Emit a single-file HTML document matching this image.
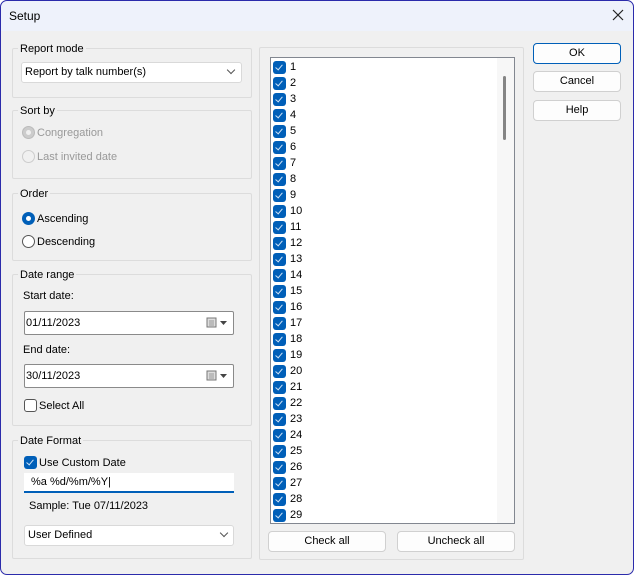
<!DOCTYPE html><html><head><style>
*{box-sizing:border-box;margin:0;padding:0}
body{width:634px;height:575px;overflow:hidden;font-family:"Liberation Sans",sans-serif;font-size:11px;color:#000;background:#fff}
.win{position:absolute;left:0;top:0;width:634px;height:575px;border-radius:7px;background:#f0f0f0;overflow:hidden}
.frame{position:absolute;left:0;top:0;width:634px;height:575px;border:1px solid #2b2bab;border-radius:7px;pointer-events:none}
.title{position:absolute;left:0;top:0;width:634px;height:31px;background:#eef2fb}
.a{position:absolute;white-space:nowrap;line-height:16px}
.gb{position:absolute;border:1px solid #dcdcdc;border-radius:2px}
.gl{position:absolute;background:#f0f0f0;padding:0 2px;line-height:15px}
.combo{position:absolute;background:#fff;border:1px solid #d9d9d9;border-radius:3px;line-height:19px;padding-left:3px}
.edit{position:absolute;background:#fff;border:1px solid #8a8a8a;border-radius:2px;line-height:22px;padding-left:1px}
.btn{position:absolute;background:#fdfdfd;border:1px solid #d0d0d0;border-radius:4px;text-align:center;line-height:19px}
.cb{position:absolute;width:13px;height:13px;background:#005fb8;border-radius:3px}
.cb:after{content:"";position:absolute;left:4px;top:2px;width:3px;height:6px;border:solid #cfe3f7;border-width:0 1px 1px 0;transform:rotate(40deg)}
.rad{position:absolute;width:13px;height:13px;border-radius:50%;border:1px solid #555;background:#fff}
.chev{position:absolute;width:6px;height:6px;border:solid #555;border-width:0 1px 1px 0;transform:rotate(45deg)}
</style></head><body><div class="win">
<div class="title"></div>
<div class="a" style="left:9px;top:8px;font-size:12px">Setup</div>
<svg class="a" style="left:612px;top:9px" width="12" height="12"><path d="M1 1L11 11M11 1L1 11" stroke="#222" stroke-width="1.2"/></svg>

<div class="gb" style="left:12px;top:48px;width:240px;height:50px"></div>
<div class="gl a" style="left:18px;top:42px">Report mode</div>
<div class="combo" style="left:21px;top:62px;width:221px;height:21px">Report by talk number(s)</div>
<div class="chev" style="left:228px;top:67px"></div>

<div class="gb" style="left:12px;top:110px;width:240px;height:69px"></div>
<div class="gl a" style="left:18px;top:104px">Sort by</div>
<div class="rad" style="left:22px;top:126px;border-color:#bbb;background:#ccc"><div style="position:absolute;left:3px;top:3px;width:5px;height:5px;border-radius:50%;background:#f0f0f0"></div></div>
<div class="a" style="left:37px;top:125px;color:#999">Congregation</div>
<div class="rad" style="left:22px;top:150px;border-color:#ccc;background:#f0f0f0"></div>
<div class="a" style="left:37px;top:149px;color:#999">Last invited date</div>

<div class="gb" style="left:12px;top:193px;width:240px;height:68px"></div>
<div class="gl a" style="left:18px;top:187px">Order</div>
<div class="rad" style="left:22px;top:212px;border:none;background:#005fb8"><div style="position:absolute;left:4px;top:4px;width:5px;height:5px;border-radius:50%;background:#fff"></div></div>
<div class="a" style="left:37px;top:211px">Ascending</div>
<div class="rad" style="left:22px;top:235px"></div>
<div class="a" style="left:37px;top:234px">Descending</div>

<div class="gb" style="left:12px;top:274px;width:240px;height:152px"></div>
<div class="gl a" style="left:18px;top:268px">Date range</div>
<div class="a" style="left:23px;top:288px">Start date:</div>
<div class="edit" style="left:24px;top:311px;width:210px;height:24px">01/11/2023</div>
<svg class="a" style="left:206px;top:317px" width="24" height="12"><rect x="1" y="1" width="9" height="9" fill="#ddd" stroke="#777"/><path d="M3 4h5M3 6h5M3 8h5" stroke="#999"/><path d="M14 4h7l-3.5 4z" fill="#444"/></svg>
<div class="a" style="left:23px;top:342px">End date:</div>
<div class="edit" style="left:24px;top:364px;width:210px;height:24px">30/11/2023</div>
<svg class="a" style="left:206px;top:370px" width="24" height="12"><rect x="1" y="1" width="9" height="9" fill="#ddd" stroke="#777"/><path d="M3 4h5M3 6h5M3 8h5" stroke="#999"/><path d="M14 4h7l-3.5 4z" fill="#444"/></svg>
<div class="a" style="left:24px;top:399px;width:13px;height:13px;border:1px solid #555;border-radius:3px;background:#fff"></div>
<div class="a" style="left:39px;top:398px">Select All</div>

<div class="gb" style="left:12px;top:440px;width:240px;height:119px"></div>
<div class="gl a" style="left:18px;top:434px">Date Format</div>
<div class="cb" style="left:24px;top:456px"></div>
<div class="a" style="left:39px;top:455px">Use Custom Date</div>
<div class="a" style="left:24px;top:473px;width:210px;height:20px;background:#fff;border-bottom:2px solid #005fb8;padding-left:7px;line-height:19px">%a %d/%m/%Y|</div>
<div class="a" style="left:29px;top:498px">Sample: Tue 07/11/2023</div>
<div class="combo" style="left:24px;top:525px;width:210px;height:21px">User Defined</div>
<div class="chev" style="left:221px;top:530px"></div>

<div class="gb" style="left:259px;top:47px;width:265px;height:513px"></div>
<div class="a" style="left:270px;top:57px;width:245px;height:467px;background:#fff;border:1px solid #828790"></div>
<div class="a" style="left:497px;top:58px;width:17px;height:465px;background:#f7f7f7"></div>
<div class="a" style="left:503px;top:76px;width:3px;height:64px;background:#858585;border-radius:2px"></div>
<div id="items"></div>
<div class="btn" style="left:268px;top:531px;width:118px;height:21px">Check all</div>
<div class="btn" style="left:397px;top:531px;width:118px;height:21px">Uncheck all</div>

<div class="btn" style="left:533px;top:43px;width:88px;height:21px;border-color:#005fb8">OK</div>
<div class="btn" style="left:533px;top:71px;width:88px;height:21px">Cancel</div>
<div class="btn" style="left:533px;top:100px;width:88px;height:21px">Help</div>
</div>
<div class="frame"></div>
<script>
var h="";for(var i=1;i<=29;i++){var y=67+16*(i-1);h+='<div class="cb" style="left:273px;top:'+(y-6)+'px"></div><div class="a" style="left:290px;top:'+(y-8)+'px">'+i+'</div>';}
document.getElementById("items").innerHTML=h;
</script>
</body></html>
